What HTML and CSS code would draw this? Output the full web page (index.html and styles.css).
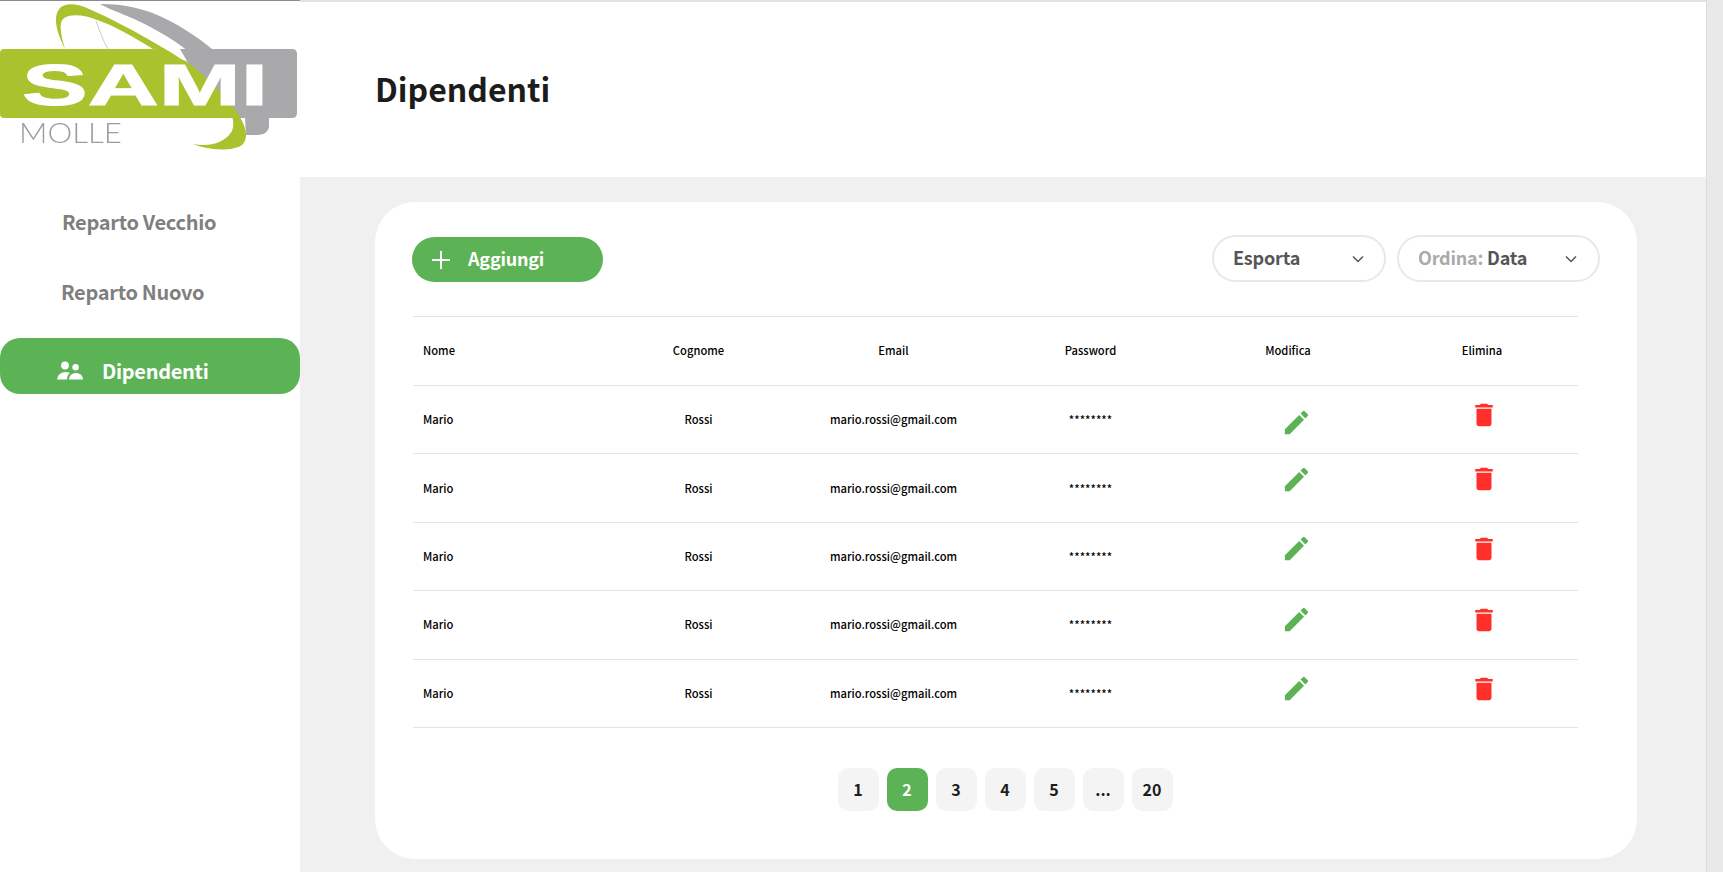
FILE: index.html
```html
<!DOCTYPE html>
<html lang="it">
<head>
    <meta charset="UTF-8">
    <meta name="viewport" content="width=device-width, initial-scale=1.0">
    <title>Dipendenti</title>
    <link rel="stylesheet" href="styles.css">
</head>
<body>
    <div class="app">
        <aside class="sidebar">
            <svg class="logo" viewBox="0 0 300 160" aria-label="Sami Molle">
                <path d="M100 3 C125 3 145 7 170 20 C185 28 200 38 212 48 L188 50 C170 36 145 22 127 15 C115 10 107 7 100 3Z" fill="#a9a9ac"/>
                <path d="M180 48 H292 Q297 48 297 53 V112 Q297 117 292 117 H220Z" fill="#a9a9ac"/>
                <path d="M245 117 H269 V126 Q268 133 258 134 H246Z" fill="#a9a9ac"/>
                <path d="M0 52 Q0 48 4 48 H153 L186 60 C210 78 226 96 233 117 H4 Q0 117 0 113Z" fill="#abc22f"/>
                <path d="M65 48 C57 32 52 16 60 7 C66 1 78 3 87 7 C110 17 135 30 160 45 C190 62 218 84 235 108 C244 122 250 134 243 143 C237 149 222 149 213 148 C205 147 198 145 193 143 C208 146 224 143 232 130 C236 120 230 108 224 100 C206 76 180 60 153 48 C135 37 113 24 97 19 C85 14 70 12 63 18 C58 24 62 38 65 48Z" fill="#abc22f"/>
                <path class="logo-thread" d="M96 20 C100 30 103 40 108 48"/>
                <text class="logo-sami" x="22" y="104" textLength="246" lengthAdjust="spacingAndGlyphs">SAMI</text>
                <text class="logo-molle" x="19" y="142" textLength="103" lengthAdjust="spacingAndGlyphs">MOLLE</text>
            </svg>
            <nav class="nav">
                <a class="nav-item nav-vecchio">Reparto Vecchio</a>
                <a class="nav-item nav-nuovo">Reparto Nuovo</a>
                <a class="nav-item nav-active">
                    <svg class="nav-icon" viewBox="0 0 26 20"><circle cx="8" cy="4.5" r="3.9"/><circle cx="18.6" cy="6.2" r="3.2"/><path d="M0 18.5 Q1 11.5 8 11 Q11 11 13 12 C10.800 13.500 10 15.500 10 18.500Z"/><path d="M12 18.500 Q12.500 12 19 12 Q25.500 12 26 18.500Z"/></svg>
                    Dipendenti
                </a>
            </nav>
        </aside>

        <main class="main">
            <header class="topbar">
                <h1>Dipendenti</h1>
            </header>
            <section class="content">
                <div class="card">
                    <div class="toolbar">
                        <button class="btn-add">
                            <svg class="plus" viewBox="0 0 18 18"><path d="M9 0v18M0 9h18"/></svg>
                            Aggiungi
                        </button>
                        <div class="filters">
                            <div class="select select-export">
                                <span>Esporta</span>
                                <svg class="chevron" viewBox="0 0 12 8"><path d="M1 1.5l5 5 5-5"/></svg>
                            </div>
                            <div class="select select-order">
                                <span><em>Ordina:</em> Data</span>
                                <svg class="chevron" viewBox="0 0 12 8"><path d="M1 1.5l5 5 5-5"/></svg>
                            </div>
                        </div>
                    </div>

                    <table class="table">
                        <colgroup>
                            <col class="col-name"><col class="col-mid"><col class="col-mid"><col class="col-pass"><col class="col-edit"><col class="col-del">
                        </colgroup>
                        <thead>
                            <tr>
                                <th class="left">Nome</th>
                                <th>Cognome</th>
                                <th>Email</th>
                                <th>Password</th>
                                <th>Modifica</th>
                                <th>Elimina</th>
                            </tr>
                        </thead>
                        <tbody>
                            <tr>
                                <td class="left">Mario</td>
                                <td>Rossi</td>
                                <td>mario.rossi@gmail.com</td>
                                <td>********</td>
                                <td class="icon-cell"><svg class="icon icon-edit" viewBox="0 0 24 24"><path d="M3 17.25V21h3.75L17.81 9.94l-3.75-3.75L3 17.25zM20.71 7.04a1 1 0 0 0 0-1.41l-2.34-2.34a1 1 0 0 0-1.41 0l-1.83 1.83 3.75 3.75 1.83-1.83z"/></svg></td>
                                <td class="icon-cell"><svg class="icon icon-delete" viewBox="0 0 24 24"><path d="M6 19c0 1.1.9 2 2 2h8c1.1 0 2-.9 2-2V7H6v12zM19 4h-3.5l-1-1h-5l-1 1H5v2h14V4z"/></svg></td>
                            </tr>
                            <tr>
                                <td class="left">Mario</td>
                                <td>Rossi</td>
                                <td>mario.rossi@gmail.com</td>
                                <td>********</td>
                                <td class="icon-cell"><svg class="icon icon-edit" viewBox="0 0 24 24"><path d="M3 17.25V21h3.75L17.81 9.94l-3.75-3.75L3 17.25zM20.71 7.04a1 1 0 0 0 0-1.41l-2.34-2.34a1 1 0 0 0-1.41 0l-1.83 1.83 3.75 3.75 1.83-1.83z"/></svg></td>
                                <td class="icon-cell"><svg class="icon icon-delete" viewBox="0 0 24 24"><path d="M6 19c0 1.1.9 2 2 2h8c1.1 0 2-.9 2-2V7H6v12zM19 4h-3.5l-1-1h-5l-1 1H5v2h14V4z"/></svg></td>
                            </tr>
                            <tr>
                                <td class="left">Mario</td>
                                <td>Rossi</td>
                                <td>mario.rossi@gmail.com</td>
                                <td>********</td>
                                <td class="icon-cell"><svg class="icon icon-edit" viewBox="0 0 24 24"><path d="M3 17.25V21h3.75L17.81 9.94l-3.75-3.75L3 17.25zM20.71 7.04a1 1 0 0 0 0-1.41l-2.34-2.34a1 1 0 0 0-1.41 0l-1.83 1.83 3.75 3.75 1.83-1.83z"/></svg></td>
                                <td class="icon-cell"><svg class="icon icon-delete" viewBox="0 0 24 24"><path d="M6 19c0 1.1.9 2 2 2h8c1.1 0 2-.9 2-2V7H6v12zM19 4h-3.5l-1-1h-5l-1 1H5v2h14V4z"/></svg></td>
                            </tr>
                            <tr>
                                <td class="left">Mario</td>
                                <td>Rossi</td>
                                <td>mario.rossi@gmail.com</td>
                                <td>********</td>
                                <td class="icon-cell"><svg class="icon icon-edit" viewBox="0 0 24 24"><path d="M3 17.25V21h3.75L17.81 9.94l-3.75-3.75L3 17.25zM20.71 7.04a1 1 0 0 0 0-1.41l-2.34-2.34a1 1 0 0 0-1.41 0l-1.83 1.83 3.75 3.75 1.83-1.83z"/></svg></td>
                                <td class="icon-cell"><svg class="icon icon-delete" viewBox="0 0 24 24"><path d="M6 19c0 1.1.9 2 2 2h8c1.1 0 2-.9 2-2V7H6v12zM19 4h-3.5l-1-1h-5l-1 1H5v2h14V4z"/></svg></td>
                            </tr>
                            <tr>
                                <td class="left">Mario</td>
                                <td>Rossi</td>
                                <td>mario.rossi@gmail.com</td>
                                <td>********</td>
                                <td class="icon-cell"><svg class="icon icon-edit" viewBox="0 0 24 24"><path d="M3 17.25V21h3.75L17.81 9.94l-3.75-3.75L3 17.25zM20.71 7.04a1 1 0 0 0 0-1.41l-2.34-2.34a1 1 0 0 0-1.41 0l-1.83 1.83 3.75 3.75 1.83-1.83z"/></svg></td>
                                <td class="icon-cell"><svg class="icon icon-delete" viewBox="0 0 24 24"><path d="M6 19c0 1.1.9 2 2 2h8c1.1 0 2-.9 2-2V7H6v12zM19 4h-3.5l-1-1h-5l-1 1H5v2h14V4z"/></svg></td>
                            </tr>
                        </tbody>
                    </table>

                    <div class="pagination">
                        <span class="page">1</span>
                        <span class="page page-active">2</span>
                        <span class="page">3</span>
                        <span class="page">4</span>
                        <span class="page">5</span>
                        <span class="page">...</span>
                        <span class="page">20</span>
                    </div>
                </div>
            </section>
        </main>
        <div class="scrollbar"></div>
    </div>
</body>
</html>
```

FILE: styles.css
```css
* {
    box-sizing: border-box;
}
html, body {
    margin: 0;
    height: 100%;
    overflow: hidden;
}
body {
    font-family: "Noto Sans CJK JP", "Noto Sans", sans-serif;
    color: #1c1c1c;
    background: #fff;
}
.app {
    display: flex;
    height: 872px;
}

/* sidebar */
.sidebar {
    width: 300px;
    flex-shrink: 0;
    background: #fff;
    border-top: 1px solid #8c8c8c;
}
.logo {
    display: block;
    width: 300px;
    height: 160px;
    filter: blur(0.5px);
}
.logo-thread {
    fill: none;
    stroke: #a9a9ac;
    stroke-width: 1;
    opacity: 0.6;
}
.logo-sami {
    font-family: "Liberation Sans", sans-serif;
    font-weight: 700;
    font-size: 58px;
    fill: #fff;
    stroke: #fff;
    stroke-width: 1;
}
.logo-molle {
    font-family: Lato, "Liberation Sans", sans-serif;
    font-weight: 300;
    font-size: 27px;
    fill: #9c9ca0;
}
.nav {
    display: flex;
    flex-direction: column;
    padding-top: 45px;
}
.nav-item {
    display: flex;
    align-items: center;
    font-size: 20px;
    font-weight: 700;
    letter-spacing: -0.3px;
    color: #7f7f7f;
}
.nav-vecchio {
    height: 30px;
    padding-left: 62px;
}
.nav-nuovo {
    height: 30px;
    margin-top: 40px;
    padding-left: 61px;
}
.nav-active {
    height: 56px;
    margin-top: 32px;
    padding: 9px 0 0 57px;
    border-radius: 20px;
    background: #5cb356;
    color: #fff;
}
.nav-icon {
    width: 26px;
    height: 20px;
    margin-right: 19px;
    fill: #fff;
}

/* main */
.main {
    flex: 1;
    display: flex;
    flex-direction: column;
    border-top: 2px solid #e2e2e2;
    border-right: 1px solid #dcdcdc;
    min-width: 0;
}
.topbar {
    height: 175px;
    flex-shrink: 0;
    display: flex;
    align-items: center;
    padding: 0 0 4px 75px;
    background: #fff;
}
.topbar h1 {
    margin: 0;
    font-size: 32px;
    font-weight: 700;
    color: #1c1c1c;
}
.content {
    flex: 1;
    background: #f0f0f0;
    padding: 25px 69px 0 75px;
}
.card {
    height: 657px;
    padding: 35px 37px 0;
    border-radius: 40px;
    background: #fff;
}

/* toolbar */
.toolbar {
    display: flex;
    justify-content: space-between;
    align-items: flex-start;
    height: 79px;
}
.btn-add {
    display: flex;
    align-items: center;
    width: 191px;
    height: 45px;
    padding: 0 0 4px 20px;
    border: 0;
    border-radius: 23px;
    background: #5cb356;
    color: #fff;
    font-family: inherit;
    font-size: 18px;
    font-weight: 700;
    letter-spacing: -0.2px;
}
.plus {
    width: 18px;
    height: 18px;
    margin: 4px 18px 0 0;
    stroke: #fff;
    stroke-width: 2;
    fill: none;
}
.filters {
    display: flex;
    gap: 11px;
    margin-top: -2px;
}
.select {
    display: flex;
    align-items: center;
    justify-content: space-between;
    height: 47px;
    padding-bottom: 3px;
    border: 2px solid #e8e8e8;
    border-radius: 24px;
    font-size: 18px;
    font-weight: 700;
    letter-spacing: -0.2px;
    color: #555;
}
.select em {
    font-style: normal;
    color: #aaa;
}
.select-export {
    width: 174px;
    padding-left: 19px;
    padding-right: 20px;
}
.select-order {
    width: 203px;
    padding-left: 19px;
    padding-right: 21px;
}
.chevron {
    width: 12px;
    height: 8px;
    margin-top: 3px;
    fill: none;
    stroke: #555;
    stroke-width: 1.5;
}

/* table */
.table {
    width: 1165px;
    table-layout: fixed;
    border-collapse: collapse;
    margin-left: 1px;
    font-size: 11.2px;
    color: #000;
}
.col-name {
    width: 188px;
}
.col-mid {
    width: 195px;
}
.col-pass {
    width: 199px;
}
.col-edit {
    width: 196px;
}
.col-del {
    width: 192px;
}
.table th, .table td {
    height: 68.4px;
    padding: 0 0 1px;
    text-align: center;
    font-weight: 500;
    border-top: 1px solid #e4e4e4;
    border-bottom: 1px solid #e4e4e4;
}
.table th {
    height: 69px;
    padding-bottom: 2px;
}
.table .left {
    text-align: left;
    padding-left: 10px;
}
.table .icon-cell {
    padding: 0;
    line-height: 0;
}
.icon {
    display: inline-block;
    width: 30px;
    height: 30px;
}
.icon-edit {
    width: 31px;
    height: 31px;
    margin-left: 16px;
    fill: #5cb356;
}
.icon-delete {
    margin-left: 3px;
    fill: #ff3029;
}
/* the icons do not sit centred in their rows */
tbody tr:nth-child(1) .icon-edit {
    margin-top: 6px;
}
tbody tr:nth-child(1) .icon-delete {
    margin-bottom: 10px;
}
tbody tr:nth-child(2) .icon {
    margin-bottom: 18px;
}
tbody tr:nth-child(3) .icon {
    margin-bottom: 15px;
}
tbody tr:nth-child(4) .icon {
    margin-bottom: 10px;
}
tbody tr:nth-child(5) .icon {
    margin-bottom: 9px;
}

/* pagination */
.pagination {
    display: flex;
    justify-content: center;
    gap: 8px;
    margin: 40px 2px 0 0;
}
.page {
    display: flex;
    align-items: center;
    justify-content: center;
    width: 41px;
    height: 43px;
    border-radius: 10px;
    background: #f4f4f4;
    font-size: 16px;
    font-weight: 700;
    color: #1c1c1c;
}
.page-active {
    background: #5cb356;
    color: #fff;
}

.scrollbar {
    width: 16px;
    flex-shrink: 0;
    background: #e9e9e9;
}
```
